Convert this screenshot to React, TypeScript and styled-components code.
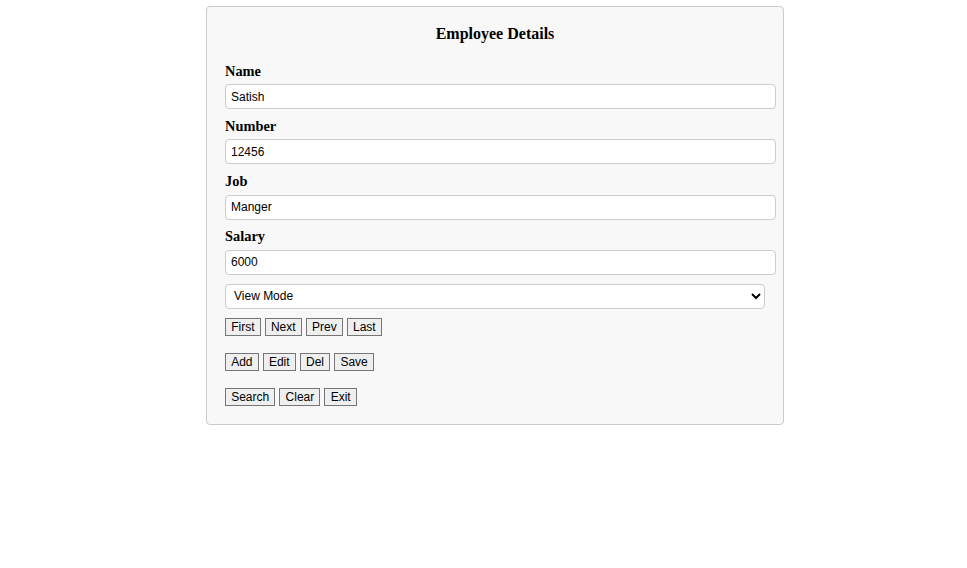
import React from "react";
import styled, { createGlobalStyle } from "styled-components";

const GlobalStyle = createGlobalStyle`
  html, body {
    margin: 0;
    padding: 0;
    background: #ffffff;
  }
  body {
    font-family: "Liberation Serif", "Times New Roman", serif;
    color: #000;
  }
`;

const Page = styled.div`
  padding: 6px 0 0 206px;
`;

const Card = styled.form`
  box-sizing: border-box;
  width: 578px;
  background: #f8f8f8;
  border: 1px solid #cccccc;
  border-radius: 4px;
  padding: 18px 18px 18px 18px;
  display: flex;
  flex-direction: column;
`;

const Title = styled.h3`
  margin: 0 0 19.5px 0;
  font-family: "Liberation Serif", "Times New Roman", serif;
  font-size: 16px;
  line-height: 18px;
  font-weight: bold;
  text-align: center;
`;

const Field = styled.div`
  display: flex;
  flex-direction: column;
  margin-bottom: 8.83px;
`;

const Label = styled.label`
  display: block;
  font-family: "Liberation Serif", "Times New Roman", serif;
  font-size: 14.4px;
  line-height: 17px;
  font-weight: bold;
  margin-bottom: 4.5px;
`;

const Input = styled.input`
  box-sizing: border-box;
  width: calc(100% + 11px);
  height: 25px;
  padding: 4px 5px;
  margin: 0;
  border: 1px solid #cccccc;
  border-radius: 4px;
  background: #ffffff;
  font-family: "Liberation Sans", Arial, sans-serif;
  font-size: 12px;
  color: #000;
  outline: none;
`;

const Select = styled.select`
  box-sizing: border-box;
  width: 540px;
  height: 25px;
  margin: 0;
  padding: 0 4px;
  border: 1px solid #cccccc;
  border-radius: 4px;
  background: #ffffff;
  font-family: "Liberation Sans", Arial, sans-serif;
  font-size: 12px;
  color: #000;
`;

const ButtonRow = styled.div<{ $top: number }>`
  display: flex;
  gap: 4px;
  margin-top: ${(p) => p.$top}px;
`;

const Button = styled.button`
  box-sizing: border-box;
  height: 18px;
  padding: 0 5.2px;
  margin: 0;
  background: #efefef;
  border: 1px solid #767676;
  border-radius: 0;
  font-family: "Liberation Sans", Arial, sans-serif;
  font-size: 12px;
  line-height: 16px;
  color: #000;
  cursor: pointer;
`;

const fields = [
  { label: "Name", value: "Satish" },
  { label: "Number", value: "12456" },
  { label: "Job", value: "Manger" },
  { label: "Salary", value: "6000" },
];

const rows = [
  ["First", "Next", "Prev", "Last"],
  ["Add", "Edit", "Del", "Save"],
  ["Search", "Clear", "Exit"],
];

export default function App() {
  return (
    <>
      <GlobalStyle />
      <Page>
        <Card onSubmit={(e) => e.preventDefault()}>
          <Title>Employee Details</Title>
          {fields.map((f) => (
            <Field key={f.label}>
              <Label>{f.label}</Label>
              <Input type="text" defaultValue={f.value} />
            </Field>
          ))}
          <Select defaultValue="view">
            <option value="view">View Mode</option>
            <option value="edit">Edit Mode</option>
          </Select>
          {rows.map((r, i) => (
            <ButtonRow key={i} $top={i === 0 ? 9.5 : 17}>
              {r.map((b) => (
                <Button type="button" key={b}>
                  {b}
                </Button>
              ))}
            </ButtonRow>
          ))}
        </Card>
      </Page>
    </>
  );
}
